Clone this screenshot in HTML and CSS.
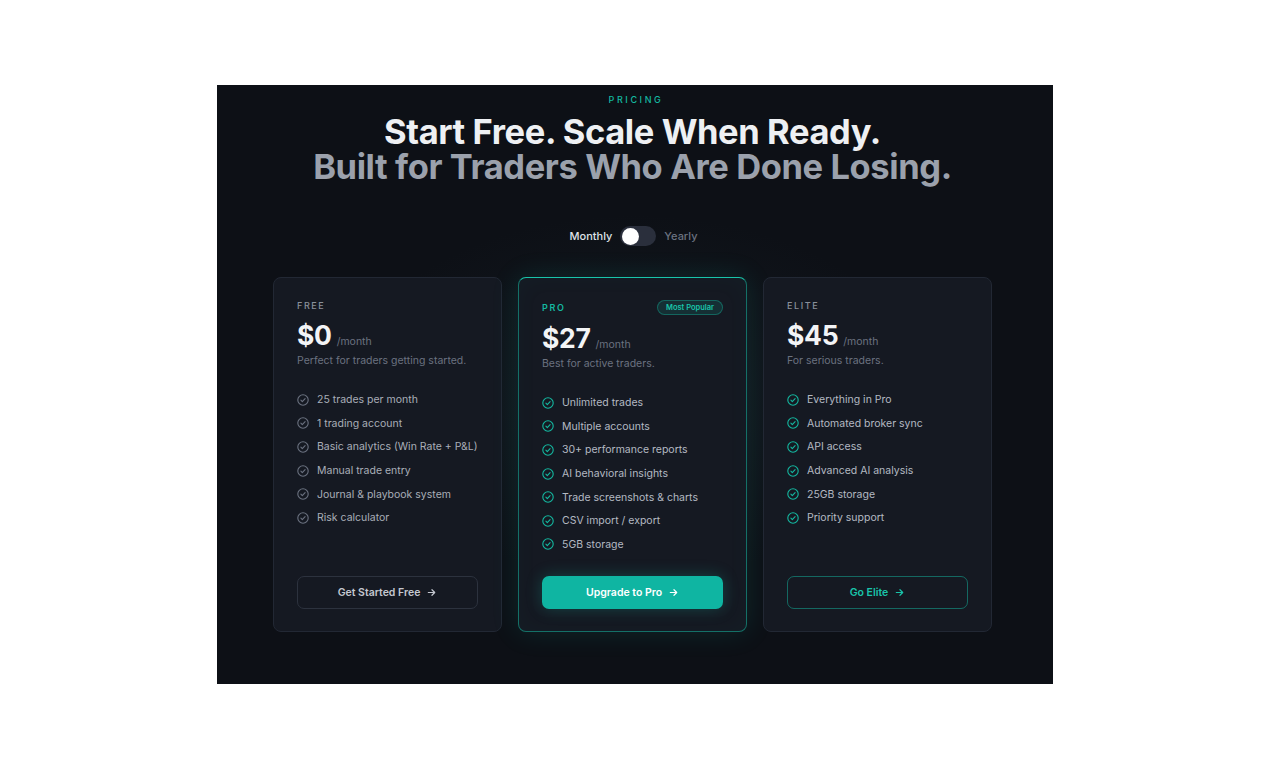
FILE: index.html
```html
<!DOCTYPE html>
<html lang="en">
<head>
<meta charset="utf-8">
<title>Pricing</title>
<link rel="stylesheet" href="styles.css">
</head>
<body>
<section class="panel">
  <div class="eyebrow">PRICING</div>
  <h1 class="headline">
    <span class="line1">Start Free. Scale When Ready.</span>
    <span class="line2">Built for Traders Who Are Done Losing.</span>
  </h1>
  <div class="billing">
    <span class="bill-on">Monthly</span>
    <span class="switch"><span class="knob"></span></span>
    <span class="bill-off">Yearly</span>
  </div>
  <div class="plans">
    <article class="card">
      <div class="card-head"><span class="tier">FREE</span></div>
      <div class="price"><span class="amount">$0</span><span class="per">/month</span></div>
      <p class="desc">Perfect for traders getting started.</p>
      <ul class="features muted">
        <li><svg class="chk" viewBox="0 0 12 12"><circle cx="6" cy="6" r="5.2"/><path d="M3.9 6.2l1.4 1.4 2.8-2.9"/></svg>25 trades per month</li>
        <li><svg class="chk" viewBox="0 0 12 12"><circle cx="6" cy="6" r="5.2"/><path d="M3.9 6.2l1.4 1.4 2.8-2.9"/></svg>1 trading account</li>
        <li><svg class="chk" viewBox="0 0 12 12"><circle cx="6" cy="6" r="5.2"/><path d="M3.9 6.2l1.4 1.4 2.8-2.9"/></svg>Basic analytics (Win Rate + P&amp;L)</li>
        <li><svg class="chk" viewBox="0 0 12 12"><circle cx="6" cy="6" r="5.2"/><path d="M3.9 6.2l1.4 1.4 2.8-2.9"/></svg>Manual trade entry</li>
        <li><svg class="chk" viewBox="0 0 12 12"><circle cx="6" cy="6" r="5.2"/><path d="M3.9 6.2l1.4 1.4 2.8-2.9"/></svg>Journal &amp; playbook system</li>
        <li><svg class="chk" viewBox="0 0 12 12"><circle cx="6" cy="6" r="5.2"/><path d="M3.9 6.2l1.4 1.4 2.8-2.9"/></svg>Risk calculator</li>
      </ul>
      <a class="btn btn-ghost">Get Started Free <svg class="arrow" viewBox="0 0 12 12"><path d="M2.5 6h7M6.5 3l3 3-3 3"/></svg></a>
    </article>

    <article class="card card-pro">
      <div class="card-head"><span class="tier tier-pro">PRO</span><span class="badge">Most Popular</span></div>
      <div class="price"><span class="amount">$27</span><span class="per">/month</span></div>
      <p class="desc">Best for active traders.</p>
      <ul class="features">
        <li><svg class="chk" viewBox="0 0 12 12"><circle cx="6" cy="6" r="5.2"/><path d="M3.9 6.2l1.4 1.4 2.8-2.9"/></svg>Unlimited trades</li>
        <li><svg class="chk" viewBox="0 0 12 12"><circle cx="6" cy="6" r="5.2"/><path d="M3.9 6.2l1.4 1.4 2.8-2.9"/></svg>Multiple accounts</li>
        <li><svg class="chk" viewBox="0 0 12 12"><circle cx="6" cy="6" r="5.2"/><path d="M3.9 6.2l1.4 1.4 2.8-2.9"/></svg>30+ performance reports</li>
        <li><svg class="chk" viewBox="0 0 12 12"><circle cx="6" cy="6" r="5.2"/><path d="M3.9 6.2l1.4 1.4 2.8-2.9"/></svg>AI behavioral insights</li>
        <li><svg class="chk" viewBox="0 0 12 12"><circle cx="6" cy="6" r="5.2"/><path d="M3.9 6.2l1.4 1.4 2.8-2.9"/></svg>Trade screenshots &amp; charts</li>
        <li><svg class="chk" viewBox="0 0 12 12"><circle cx="6" cy="6" r="5.2"/><path d="M3.9 6.2l1.4 1.4 2.8-2.9"/></svg>CSV import / export</li>
        <li><svg class="chk" viewBox="0 0 12 12"><circle cx="6" cy="6" r="5.2"/><path d="M3.9 6.2l1.4 1.4 2.8-2.9"/></svg>5GB storage</li>
      </ul>
      <a class="btn btn-solid">Upgrade to Pro <svg class="arrow" viewBox="0 0 12 12"><path d="M2.5 6h7M6.5 3l3 3-3 3"/></svg></a>
    </article>

    <article class="card">
      <div class="card-head"><span class="tier">ELITE</span></div>
      <div class="price"><span class="amount">$45</span><span class="per">/month</span></div>
      <p class="desc">For serious traders.</p>
      <ul class="features">
        <li><svg class="chk" viewBox="0 0 12 12"><circle cx="6" cy="6" r="5.2"/><path d="M3.9 6.2l1.4 1.4 2.8-2.9"/></svg>Everything in Pro</li>
        <li><svg class="chk" viewBox="0 0 12 12"><circle cx="6" cy="6" r="5.2"/><path d="M3.9 6.2l1.4 1.4 2.8-2.9"/></svg>Automated broker sync</li>
        <li><svg class="chk" viewBox="0 0 12 12"><circle cx="6" cy="6" r="5.2"/><path d="M3.9 6.2l1.4 1.4 2.8-2.9"/></svg>API access</li>
        <li><svg class="chk" viewBox="0 0 12 12"><circle cx="6" cy="6" r="5.2"/><path d="M3.9 6.2l1.4 1.4 2.8-2.9"/></svg>Advanced AI analysis</li>
        <li><svg class="chk" viewBox="0 0 12 12"><circle cx="6" cy="6" r="5.2"/><path d="M3.9 6.2l1.4 1.4 2.8-2.9"/></svg>25GB storage</li>
        <li><svg class="chk" viewBox="0 0 12 12"><circle cx="6" cy="6" r="5.2"/><path d="M3.9 6.2l1.4 1.4 2.8-2.9"/></svg>Priority support</li>
      </ul>
      <a class="btn btn-outline">Go Elite <svg class="arrow" viewBox="0 0 12 12"><path d="M2.5 6h7M6.5 3l3 3-3 3"/></svg></a>
    </article>
  </div>
</section>
</body>
</html>
```
FILE: styles.css
```css
* { box-sizing: border-box; }
html, body { margin: 0; padding: 0; background: #ffffff; }
body {
  font-family: Inter, "Noto Sans", "Liberation Sans", sans-serif;
  -webkit-font-smoothing: antialiased;
}
.panel {
  width: 836px;
  height: 599px;
  margin: 85px auto 0;
  padding-top: 8px;
  background:
    radial-gradient(ellipse 420px 260px at 50% 52%, rgba(40, 60, 70, 0.22), rgba(13, 16, 22, 0) 70%),
    #0d1016;
  display: flex;
  flex-direction: column;
  align-items: center;
}
.eyebrow {
  font-size: 9px;
  line-height: 13px;
  letter-spacing: 2.6px;
  font-weight: 500;
  color: #14b8a0;
  padding-left: 2px;
}
.headline {
  margin: 8px 0 0 -5px;
  font-size: 34.5px;
  line-height: 35px;
  font-weight: 700;
  letter-spacing: -0.4px;
  text-align: center;
  display: flex;
  flex-direction: column;
}
.line1 { color: #eef0f3; }
.line2 { color: #9ba1ac; }
.billing {
  margin-top: 42px;
  display: flex;
  align-items: center;
  gap: 8px;
  font-size: 11px;
  font-weight: 500;
  margin-left: -3px;
}
.bill-on { color: #dfe2e7; }
.bill-off { color: #6b7280; }
.switch {
  width: 36px;
  height: 20px;
  border-radius: 10px;
  background: #2a2f3c;
  padding: 2px;
  display: flex;
  align-items: center;
}
.knob {
  width: 17px;
  height: 17px;
  border-radius: 50%;
  background: #ffffff;
}
.plans {
  margin-top: 31px;
  display: grid;
  grid-template-columns: repeat(3, 229px);
  gap: 16px;
  margin-left: -5px;
}
.card {
  background: #151922;
  border: 1px solid #222834;
  border-radius: 8px;
  padding: 22px 23px 22px;
  display: flex;
  flex-direction: column;
}
.card-pro {
  border-color: rgba(20, 184, 160, 0.55);
  border-top-color: #19c4aa;
  box-shadow: 0 0 28px rgba(20, 184, 160, 0.14), inset 0 0 24px rgba(20, 184, 160, 0.03);
}
.card-head {
  display: flex;
  align-items: center;
  justify-content: space-between;
  min-height: 12px;
}
.tier {
  font-size: 9px;
  line-height: 12px;
  letter-spacing: 1.6px;
  font-weight: 500;
  color: #8a909b;
}
.tier-pro { color: #14b8a0; font-weight: 600; }
.badge {
  height: 15px;
  padding: 0 8px;
  border-radius: 8px;
  font-size: 7.5px;
  line-height: 13px;
  font-weight: 600;
  color: #19c4aa;
  background: rgba(20, 184, 160, 0.14);
  border: 1px solid rgba(20, 184, 160, 0.4);
}
.price {
  margin-top: 10px;
  display: flex;
  align-items: baseline;
  gap: 5px;
}
.amount {
  font-size: 26.5px;
  line-height: 26px;
  font-weight: 700;
  color: #f3f4f6;
  letter-spacing: -0.3px;
}
.per {
  font-size: 10.5px;
  color: #6b7280;
}
.desc {
  margin: 5px 0 0;
  font-size: 10.5px;
  line-height: 16px;
  color: #6b7280;
}
.features {
  list-style: none;
  margin: 19px 0 20px;
  padding: 0;
  font-size: 10.5px;
  color: #b4b9c2;
}
.features li {
  display: flex;
  align-items: center;
  gap: 8px;
  height: 23.6px;
}
.chk {
  width: 12px;
  height: 12px;
  flex: none;
  fill: none;
  stroke: #14b8a0;
  stroke-width: 1.1;
  stroke-linecap: round;
  stroke-linejoin: round;
}
.muted { color: #a9aeb8; }
.muted .chk { stroke: #6b7280; }
.btn {
  margin-top: auto;
  height: 33px;
  border-radius: 7px;
  display: flex;
  align-items: center;
  justify-content: center;
  gap: 6px;
  font-size: 10.5px;
  font-weight: 600;
}
.arrow {
  width: 11px;
  height: 11px;
  fill: none;
  stroke: currentColor;
  stroke-width: 1.3;
  stroke-linecap: round;
  stroke-linejoin: round;
}
.btn-ghost {
  border: 1px solid #2c323e;
  color: #c4c8d0;
}
.btn-solid {
  background: #0fb5a2;
  color: #ffffff;
  box-shadow: 0 0 16px rgba(20, 184, 160, 0.28);
}
.btn-outline {
  border: 1px solid rgba(20, 184, 160, 0.5);
  color: #19c4aa;
}
```
